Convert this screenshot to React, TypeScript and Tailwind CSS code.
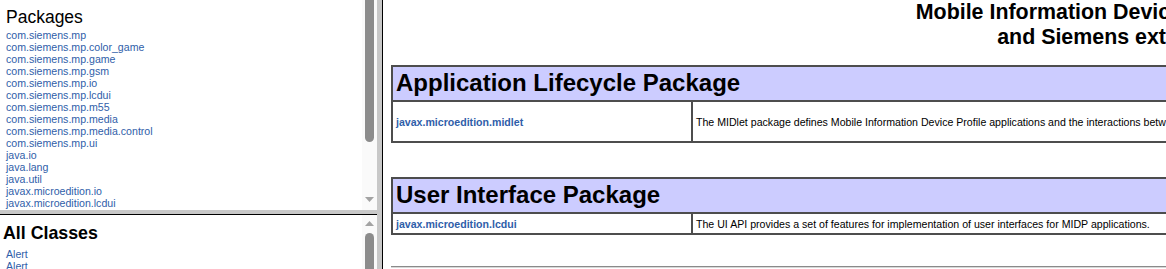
import React from "react";

const packages = [
  "com.siemens.mp",
  "com.siemens.mp.color_game",
  "com.siemens.mp.game",
  "com.siemens.mp.gsm",
  "com.siemens.mp.io",
  "com.siemens.mp.lcdui",
  "com.siemens.mp.m55",
  "com.siemens.mp.media",
  "com.siemens.mp.media.control",
  "com.siemens.mp.ui",
  "java.io",
  "java.lang",
  "java.util",
  "javax.microedition.io",
  "javax.microedition.lcdui",
  "javax.microedition.lcdui.game",
];

function DownArrow() {
  return (
    <svg width="9" height="5" viewBox="0 0 9 5">
      <polygon points="0,0 9,0 4.5,5" fill="#a3a3a3" />
    </svg>
  );
}
function UpArrow() {
  return (
    <svg width="9" height="5" viewBox="0 0 9 5">
      <polygon points="0,5 9,5 4.5,0" fill="#a3a3a3" />
    </svg>
  );
}

export default function App() {
  return (
    <div className="flex h-[269px] w-[1166px] overflow-hidden bg-white font-['Liberation_Sans',Arial,sans-serif] text-black">
      {/* Left frameset */}
      <div className="flex w-[377px] shrink-0 flex-col">
        {/* Packages frame */}
        <div className="flex h-[210px] shrink-0">
          <div className="min-w-0 flex-1 overflow-hidden pl-[6px] pt-[7px]">
            <div className="text-[17.5px] leading-[20px]">Packages</div>
            <div className="mt-[2px] flex flex-col text-[10.6px] leading-[12px] text-[#2f5ea9]">
              {packages.map((p) => (
                <span key={p} className="whitespace-nowrap">{p}</span>
              ))}
            </div>
          </div>
          <div className="flex w-[15px] shrink-0 flex-col items-center bg-[#fafafa]">
            <div className="h-[142px] w-[9px] rounded-b-[5px] bg-[#8c8c8c]" />
            <div className="flex-1" />
            <div className="mb-[8px] flex h-[5px] items-center justify-center">
              <DownArrow />
            </div>
          </div>
        </div>
        <div className="h-[4px] shrink-0 bg-[#c8c8c8]" />
        <div className="h-px shrink-0 bg-black" />
        {/* All classes frame */}
        <div className="flex min-h-0 flex-1">
          <div className="min-w-0 flex-1 overflow-hidden pt-[8px]">
            <div className="pl-[3px] text-[17.8px] font-bold leading-[21px]">All Classes</div>
            <div className="mt-[4px] flex flex-col pl-[6px] text-[10.6px] leading-[12px] text-[#2f5ea9]">
              <span>Alert</span>
              <span>Alert</span>
              <span>AlertType</span>
            </div>
          </div>
          <div className="flex w-[15px] shrink-0 flex-col items-center bg-[#fafafa] pt-[6px]">
            <div className="flex h-[5px] items-center justify-center">
              <UpArrow />
            </div>
            <div className="mt-[7px] h-[60px] w-[9px] rounded-t-[5px] bg-[#8c8c8c]" />
          </div>
        </div>
      </div>
      <div className="w-[5px] shrink-0 bg-[#c8c8c8]" />
      <div className="w-px shrink-0 bg-black" />

      {/* Right frame */}
      <div className="min-w-0 flex-1 overflow-hidden">
        <div className="ml-[8px] w-[1462px]">
          <div className="text-center text-[21.4px] font-bold leading-[25px]">
            <div className="whitespace-nowrap">Mobile Information Device Profile (MIDP)</div>
            <div className="whitespace-nowrap">and Siemens extensions</div>
          </div>

          <div className="mt-[15px] border-2 border-[#4d4d4d]">
            <div className="h-[35px] border-b-2 border-[#4d4d4d] bg-[#ccccff] px-[3px] pb-[2px] text-[24px] font-bold leading-[31px] whitespace-nowrap">
              Application Lifecycle Package
            </div>
            <div className="flex h-[39px] text-[10.6px] leading-[12px]">
              <div className="flex w-[300px] shrink-0 items-center border-r-2 border-[#4d4d4d] px-[3px] font-bold text-[#2f5ea9]">
                javax.microedition.midlet
              </div>
              <div className="flex min-w-0 flex-1 items-center whitespace-nowrap px-[3px]">
                The MIDlet package defines Mobile Information Device Profile applications and the interactions between the application and the environment in which the application runs.
              </div>
            </div>
          </div>

          <div className="mt-[34px] border-2 border-[#4d4d4d]">
            <div className="h-[35px] border-b-2 border-[#4d4d4d] bg-[#ccccff] px-[3px] pb-[2px] text-[24px] font-bold leading-[31px] whitespace-nowrap">
              User Interface Package
            </div>
            <div className="flex h-[19px] text-[10.6px] leading-[12px]">
              <div className="flex w-[300px] shrink-0 items-center border-r-2 border-[#4d4d4d] px-[3px] font-bold text-[#2f5ea9]">
                javax.microedition.lcdui
              </div>
              <div className="flex min-w-0 flex-1 items-center whitespace-nowrap px-[3px]">
                The UI API provides a set of features for implementation of user interfaces for MIDP applications.
              </div>
            </div>
          </div>

          <div className="mt-[31px] h-[2px] border-t border-b border-t-[#8a8a8a] border-b-[#d8d8d8]" />
        </div>
      </div>
    </div>
  );
}
